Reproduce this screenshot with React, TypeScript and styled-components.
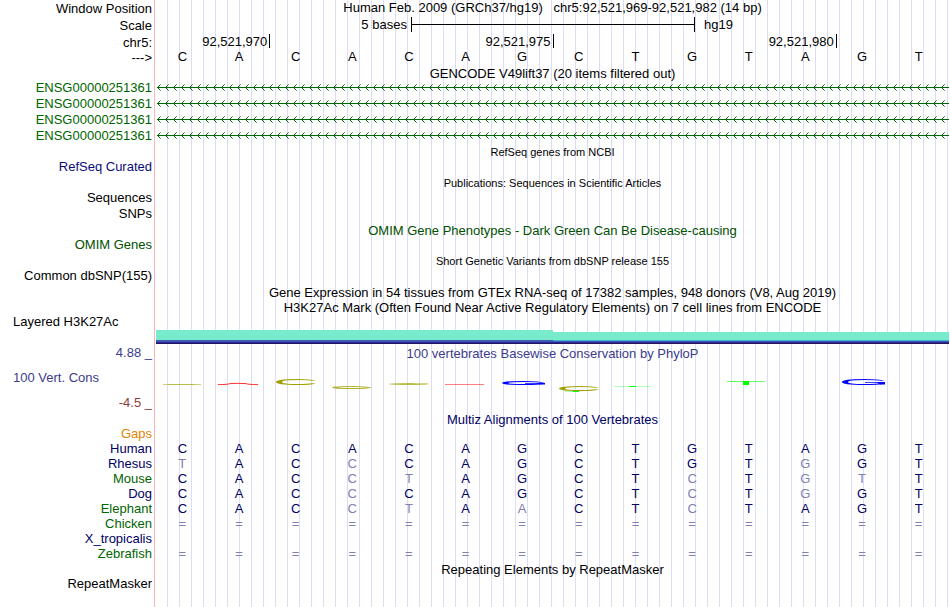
import React from "react";
import styled, { createGlobalStyle } from "styled-components";

const GlobalStyle = createGlobalStyle`
  body {
    margin: 0;
    background: #fff;
  }
`;

// guide lines repeat every 12px, the pink rule separates labels from data
const Browser = styled.main`
  min-height: 100vh;
  box-sizing: border-box;
  padding-right: 1px;
  overflow: hidden;
  color: #000;
  font-family: "Liberation Sans", Arial, Helvetica, sans-serif;
  font-size: 13px;
  line-height: 15px;
  background:
    linear-gradient(
      to right,
      #fff 154px,
      #ffb4b4 154px,
      #ffb4b4 155px,
      #fff 155px,
      #fff 156px,
      transparent 156px
    ),
    repeating-linear-gradient(
      to right,
      transparent 0,
      transparent 11px,
      #dcdcf5 11px,
      #dcdcf5 12px
    );
`;

const Row = styled.div<{ $height: number }>`
  display: grid;
  grid-template-columns: 156px minmax(0, 1fr);
  min-height: ${(p) => p.$height}px;
`;

const HeaderRow = styled(Row)`
  height: ${(p) => p.$height}px;
`;

const Label = styled.div<{ $color?: string; $left?: boolean }>`
  padding: 0 4px 0 13px;
  text-align: ${(p) => (p.$left ? "left" : "right")};
  color: ${(p) => p.$color || "#000"};
  white-space: nowrap;
`;

const HeaderLabel = styled(Label)`
  line-height: 17px;
`;

const Title = styled.div<{ $color?: string; $small?: boolean }>`
  height: 15px;
  line-height: 17px;
  font-size: ${(p) => (p.$small ? 11 : 13)}px;
  text-align: center;
  white-space: pre;
  color: ${(p) => p.$color || "#000"};
`;

const PositionTitle = styled(Title)`
  line-height: 15px;
`;

const ScaleBar = styled.div`
  display: grid;
  grid-template-columns: 9fr 10fr 9fr;
`;

const ScaleStart = styled.span`
  text-align: right;
  padding-right: 4px;
`;

const ScaleEnd = styled.span`
  padding-left: 10px;
`;

const ScaleLine = styled.span`
  height: 15px;
  margin-right: -1px;
  border: solid #000;
  border-width: 0 1px;
  background: linear-gradient(#000, #000) center / 100% 1px no-repeat;
`;

const Ruler = styled.div`
  display: grid;
  grid-template-columns: 2fr 5fr 5fr 2fr;
`;

const Tick = styled.span`
  height: 14px;
  padding-right: 2px;
  margin-right: -1px;
  border-right: 1px solid #000;
  text-align: right;
`;

const Bases = styled.div`
  display: grid;
  grid-template-columns: repeat(14, 1fr);
  margin: 0 2px 0 -2px;
  text-align: center;
`;

const Drawing = styled.svg<{ $height: number }>`
  display: block;
  width: 100%;
  height: ${(p) => p.$height}px;
`;

const Signal = styled.div`
  padding-top: 16px;
`;

const ScoreLabels = styled.div`
  display: flex;
  flex-direction: column;
  gap: 10px;
`;

const Alignment = styled.table`
  width: calc(100% - 2px);
  table-layout: fixed;
  border-collapse: collapse;
`;

const Species = styled.th<{ $color: string }>`
  width: 152px;
  height: 15px;
  padding: 0 2px 0 0;
  text-align: right;
  font-weight: normal;
  color: ${(p) => p.$color};
`;

const Base = styled.td<{ $faded: boolean }>`
  padding: 0;
  text-align: center;
  color: ${(p) => (p.$faded ? "#8080b4" : "#000064")};
`;

const NAVY = "#000064";
const GREEN = "#006400";
const OLIVE = "#a0a000";

const sequence = "CACACAGCTGTAGT";

// lower case bases differ from human and are drawn faded
const species = [
  { name: "Gaps", color: "#e68200", bases: "" },
  { name: "Human", color: NAVY, bases: "CACACAGCTGTAGT" },
  { name: "Rhesus", color: NAVY, bases: "tACcCAGCTGTgGT" },
  { name: "Mouse", color: GREEN, bases: "CACctAGCTcTgtT" },
  { name: "Dog", color: NAVY, bases: "CACcCAGCTcTgGT" },
  { name: "Elephant", color: GREEN, bases: "CACctAaCTcTAGT" },
  { name: "Chicken", color: GREEN, bases: "==============" },
  { name: "X_tropicalis", color: NAVY, bases: "" },
  { name: "Zebrafish", color: GREEN, bases: "==============" },
];

// a centred title with nothing in the label column
const TitleRow: React.FC<{ color?: string; small?: boolean; children: React.ReactNode }> = ({
  color,
  small,
  children,
}) => (
  <Row $height={15}>
    <span />
    <Title $color={color} $small={small}>
      {children}
    </Title>
  </Row>
);

const GeneLine: React.FC<{ id: string }> = ({ id }) => (
  <Drawing $height={16} aria-hidden="true">
    <defs>
      <pattern id={id} width="8" height="16" patternUnits="userSpaceOnUse">
        <path d="M1 7h1v1h-1zM2 6h1v3h-1zM3 5h1v1h-1zM3 9h1v1h-1z" fill={GREEN} />
        <path d="M4 4h1v1h-1zM4 10h1v1h-1z" fill={GREEN} opacity="0.6" />
      </pattern>
    </defs>
    <rect x="1" y="7" width="100%" height="1" fill={GREEN} />
    <rect width="100%" height="16" fill={`url(#${id})`} />
  </Drawing>
);

type RingProps = {
  x: number;
  y: number;
  h: number;
  color: string;
  tail?: boolean;
  opacity?: number;
};

// flattened C, or G when it has a tail
const Ring: React.FC<RingProps> = ({ x, y, h, color, tail, opacity = 1 }) => {
  const w = tail ? 43 : 40;
  const mid = h / 2;
  const low = h - 1;
  return (
    <g transform={`translate(${x} ${y})`} opacity={opacity} fill={color}>
      <path
        d={`M${w} 1.6Q${w - 6} 0 22 0Q0 0 0 ${mid}Q0 ${h} 22 ${h}Q${w - 6} ${h} ${w} ${h - 1.6}L${w - 4} ${h - 1.8}Q${w - 8} ${low} 22 ${low}Q6 ${low} 6 ${mid}Q6 1 22 1Q${w - 8} 1 ${w - 4} 1.8Z`}
      />
      {tail && <path d={`M23 ${mid}H43V${h - 0.5}H38L35 ${mid + 0.7}H23Z`} />}
    </g>
  );
};

const ConservationLogo: React.FC = () => (
  <Drawing $height={50} viewBox="0 0 793 50" preserveAspectRatio="none" aria-hidden="true">
    <path d="M7 24.5H45" stroke={OLIVE} opacity="0.5" />
    <path d="M12 24.5H39" stroke={OLIVE} opacity="0.4" />
    <path d="M62 24.6Q72 24.6 74 23.6Q82 23.1 90 23.6Q92 24.6 102 24.6" fill="none" stroke="#ff0000" opacity="0.8" />
    <Ring x={120} y={19} h={6} color={OLIVE} />
    <Ring x={176} y={26} h={3} color={OLIVE} opacity={0.8} />
    <Ring x={233} y={23} h={2} color={OLIVE} opacity={0.7} />
    <path d="M289 24.5H328" stroke="#ff0000" opacity="0.5" />
    <Ring x={346} y={21} h={4} color="#0000ff" tail />
    <Ring x={403} y={26} h={5} color={OLIVE} />
    <path d="M409 31.5H417" stroke="#00ff00" opacity="0.3" />
    <path d="M417 31.5H423" stroke="#00ff00" />
    <path d="M458 26.5H495" stroke="#00ff00" opacity="0.3" />
    <path d="M474 26.5H480" stroke="#00ff00" />
    <path d="M571 21.5H609" stroke="#00ff00" opacity="0.6" />
    <path d="M587 21h6v4h-6z" fill="#00ff00" />
    <Ring x={686} y={19} h={6} color="#0000ff" tail />
  </Drawing>
);

const App: React.FC = () => (
  <>
    <GlobalStyle />
    <Browser>
      <HeaderRow $height={17}>
        <HeaderLabel>Window Position</HeaderLabel>
        <PositionTitle>
          {"Human Feb. 2009 (GRCh37/hg19)   chr5:92,521,969-92,521,982 (14 bp)"}
        </PositionTitle>
      </HeaderRow>
      <HeaderRow $height={17}>
        <HeaderLabel>Scale</HeaderLabel>
        <ScaleBar>
          <ScaleStart>5 bases</ScaleStart>
          <ScaleLine />
          <ScaleEnd>hg19</ScaleEnd>
        </ScaleBar>
      </HeaderRow>
      <HeaderRow $height={15}>
        <HeaderLabel>chr5:</HeaderLabel>
        <Ruler>
          <Tick>92,521,970</Tick>
          <Tick>92,521,975</Tick>
          <Tick>92,521,980</Tick>
        </Ruler>
      </HeaderRow>
      <HeaderRow $height={16}>
        <HeaderLabel>{"--->"}</HeaderLabel>
        <Bases>
          {sequence.split("").map((base, i) => (
            <span key={i}>{base}</span>
          ))}
        </Bases>
      </HeaderRow>

      <TitleRow>GENCODE V49lift37 (20 items filtered out)</TitleRow>
      {[1, 2, 3, 4].map((n) => (
        <Row key={n} $height={16}>
          <Label $color={GREEN}>ENSG00000251361</Label>
          <GeneLine id={`strand-${n}`} />
        </Row>
      ))}

      <TitleRow small>RefSeq genes from NCBI</TitleRow>
      <Row $height={16}>
        <Label $color="#0c0c78">RefSeq Curated</Label>
      </Row>
      <TitleRow small>Publications: Sequences in Scientific Articles</TitleRow>
      <Row $height={16}>
        <Label>Sequences</Label>
      </Row>
      <Row $height={16}>
        <Label>SNPs</Label>
      </Row>
      <TitleRow color="#005000">OMIM Gene Phenotypes - Dark Green Can Be Disease-causing</TitleRow>
      <Row $height={16}>
        <Label $color="#005000">OMIM Genes</Label>
      </Row>
      <TitleRow small>Short Genetic Variants from dbSNP release 155</TitleRow>
      <Row $height={16}>
        <Label>Common dbSNP(155)</Label>
      </Row>
      <TitleRow>
        Gene Expression in 54 tissues from GTEx RNA-seq of 17382 samples, 948 donors (V8, Aug 2019)
      </TitleRow>

      <TitleRow>
        H3K27Ac Mark (Often Found Near Active Regulatory Elements) on 7 cell lines from ENCODE
      </TitleRow>
      <Row $height={31}>
        <Label $left>Layered H3K27Ac</Label>
        <Signal>
          <Drawing $height={14} viewBox="0 0 793 14" preserveAspectRatio="none" aria-hidden="true">
            <path d="M0 0H397V2H793V10H0Z" fill="#78ebcd" />
            <path d="M0 10H397V12H0Z" fill="#3c5aaf" />
            <path d="M397 10H793V11H397Z" fill="#3cb4cd" />
            <path d="M397 11H793V12H397Z" fill="#3c5aaf" />
            <path d="M0 12H793V13H0Z" fill="#2828a0" />
            <path d="M0 13H793V14H0Z" fill="#28145a" />
          </Drawing>
        </Signal>
      </Row>

      <Row $height={66}>
        <ScoreLabels>
          <Label $color="#3c3c8c">4.88 _</Label>
          <Label $left $color="#3c3c8c">
            100 Vert. Cons
          </Label>
          <Label $color="#8c3c3c">-4.5 _</Label>
        </ScoreLabels>
        <div>
          <Title $color="#3c3c8c">100 vertebrates Basewise Conservation by PhyloP</Title>
          <ConservationLogo />
        </div>
      </Row>

      <TitleRow color={NAVY}>Multiz Alignments of 100 Vertebrates</TitleRow>
      <Alignment>
        <tbody>
          {species.map((row) => (
            <tr key={row.name}>
              <Species scope="row" $color={row.color}>
                {row.name}
              </Species>
              {sequence.split("").map((_, i) => {
                const base = row.bases[i] || "";
                return (
                  <Base key={i} $faded={base === "=" || base !== base.toUpperCase()}>
                    {base.toUpperCase()}
                  </Base>
                );
              })}
            </tr>
          ))}
        </tbody>
      </Alignment>

      <TitleRow>Repeating Elements by RepeatMasker</TitleRow>
      <Row $height={16}>
        <Label>RepeatMasker</Label>
      </Row>
    </Browser>
  </>
);

export default App;
